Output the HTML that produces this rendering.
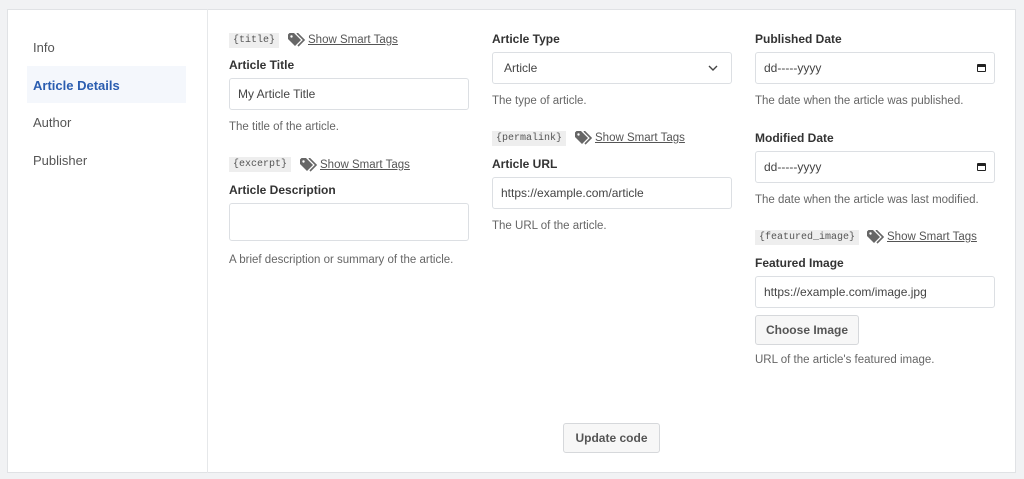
<!DOCTYPE html>
<html><head><style>
body{margin:0;width:1024px;height:479px;background:#f1f2f4;font-family:"Liberation Sans",sans-serif;position:relative;overflow:hidden}
.card{position:absolute;left:7px;top:9px;width:1009px;height:464px;background:#fff;border:1px solid #e0e2e5;box-sizing:border-box}
.side{position:absolute;left:7px;top:9px;width:200px;height:464px;border-right:1px solid #e6e8ea}
.a{position:absolute}
.nav{position:absolute;left:33px;font-size:13px;color:#555}
.act{position:absolute;left:27px;top:66px;width:159px;height:37px;background:#f4f7fc}
.lbl{position:absolute;font-size:12px;font-weight:bold;color:#333}
.inp{position:absolute;width:240px;height:32px;border:1px solid #dcdfe3;border-radius:3px;box-sizing:border-box;font-size:12px;color:#444;padding-left:8px;line-height:31px}
.help{position:absolute;font-size:11.5px;color:#666}
.tag{position:absolute;font-family:"Liberation Mono",monospace;font-size:10px;color:#555;background:#eeeeee;padding:0 4px;height:15px;line-height:15px}
.st{position:absolute;font-size:11.5px;color:#555;text-decoration:underline}
.btn{position:absolute;border:1px solid #d6d8db;background:#f7f7f7;border-radius:3px;box-sizing:border-box;font-size:12px;font-weight:bold;color:#555;text-align:center}
.cal{position:absolute;right:8px;top:11px;width:9px;height:8px;border:1.5px solid #222;border-top-width:3px;border-radius:1px;box-sizing:border-box}
</style></head><body>
<div class="card"></div>
<div class="side"></div>
<div class="act"></div>
<div class="nav" style="top:40px">Info</div>
<div class="nav" style="top:78px;color:#2a5db0;font-weight:bold">Article Details</div>
<div class="nav" style="top:115px">Author</div>
<div class="nav" style="top:153px">Publisher</div>

<svg width="0" height="0" style="position:absolute"><defs><symbol id="t" viewBox="0 0 18 14"><path d="M0 1.5V6l7 7 6-6-7-7H1.5z" fill="#666"/><circle cx="3.5" cy="3.5" r="1.2" fill="#fff"/><path d="M9 0l7 7-6 6" fill="none" stroke="#666" stroke-width="1.6"/></symbol></defs></svg>

<!-- col1 -->
<div class="tag" style="left:229px;top:33px">{title}</div>
<svg class="a" style="left:288px;top:33px" width="18" height="14"><use href="#t"/></svg>
<div class="st" style="left:308px;top:34px">Show Smart Tags</div>
<div class="lbl" style="left:229px;top:58px">Article Title</div>
<div class="inp" style="left:229px;top:78px">My Article Title</div>
<div class="help" style="left:229px;top:121px">The title of the article.</div>
<div class="tag" style="left:229px;top:157px">{excerpt}</div>
<svg class="a" style="left:300px;top:158px" width="18" height="14"><use href="#t"/></svg>
<div class="st" style="left:320px;top:159px">Show Smart Tags</div>
<div class="lbl" style="left:229px;top:183px">Article Description</div>
<div class="inp" style="left:229px;top:203px;height:38px"></div>
<div class="help" style="left:229px;top:254px">A brief description or summary of the article.</div>

<!-- col2 -->
<div class="lbl" style="left:492px;top:32px">Article Type</div>
<div class="inp" style="left:492px;top:52px;padding-left:11px">Article<svg class="a" style="right:13px;top:12px" width="10" height="7"><path d="M1 1l4 4 4-4" fill="none" stroke="#444" stroke-width="1.4"/></svg></div>
<div class="help" style="left:492px;top:95px">The type of article.</div>
<div class="tag" style="left:492px;top:131px">{permalink}</div>
<svg class="a" style="left:575px;top:131px" width="18" height="14"><use href="#t"/></svg>
<div class="st" style="left:595px;top:132px">Show Smart Tags</div>
<div class="lbl" style="left:492px;top:157px">Article URL</div>
<div class="inp" style="left:492px;top:177px">https://example.com/article</div>
<div class="help" style="left:492px;top:220px">The URL of the article.</div>

<!-- col3 -->
<div class="lbl" style="left:755px;top:32px">Published Date</div>
<div class="inp" style="left:755px;top:52px">dd-----yyyy<div class="cal"></div></div>
<div class="help" style="left:755px;top:95px">The date when the article was published.</div>
<div class="lbl" style="left:755px;top:131px">Modified Date</div>
<div class="inp" style="left:755px;top:151px">dd-----yyyy<div class="cal"></div></div>
<div class="help" style="left:755px;top:194px">The date when the article was last modified.</div>
<div class="tag" style="left:755px;top:230px">{featured_image}</div>
<svg class="a" style="left:867px;top:230px" width="18" height="14"><use href="#t"/></svg>
<div class="st" style="left:887px;top:231px">Show Smart Tags</div>
<div class="lbl" style="left:755px;top:256px">Featured Image</div>
<div class="inp" style="left:755px;top:276px">https://example.com/image.jpg</div>
<div class="btn" style="left:755px;top:315px;width:104px;height:30px;line-height:28px">Choose Image</div>
<div class="help" style="left:755px;top:354px">URL of the article's featured image.</div>

<div class="btn" style="left:563px;top:423px;width:97px;height:30px;line-height:28px">Update code</div>
</body></html>
